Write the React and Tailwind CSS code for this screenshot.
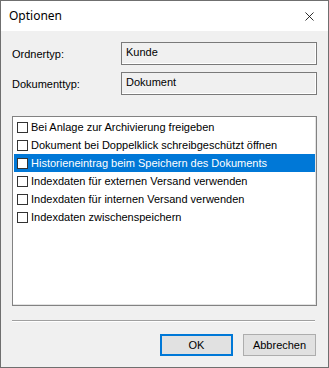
import { X } from 'lucide-react';

const items = [
  'Bei Anlage zur Archivierung freigeben',
  'Dokument bei Doppelklick schreibgeschützt öffnen',
  'Historieneintrag beim Speichern des Dokuments',
  'Indexdaten für externen Versand verwenden',
  'Indexdaten für internen Versand verwenden',
  'Indexdaten zwischenspeichern',
];

const sans = "font-['Liberation_Sans',Arial,sans-serif]";

function Field({ label, value }) {
  return (
    <div className="flex items-center">
      <div className="w-[109px] pt-[1px] text-[11px] text-black">{label}</div>
      <div className="h-[23px] w-[196px] border border-[#7a7a7a] bg-[#f0f0f0] px-[4px] pt-[2px] text-[11px] leading-[14px] text-black shadow-[inset_-1px_-1px_0_#ffffff]">
        {value}
      </div>
    </div>
  );
}

export default function App() {
  const selected = 2;

  return (
    <div className={`${sans} flex h-[368px] w-[329px] flex-col border border-[#6f6f6f] bg-white`}>
      <div className="flex h-[30px] shrink-0 items-center justify-between bg-white pl-[8px] pr-[11px]">
        <span className="font-['Noto_Sans',sans-serif] text-[12px] text-black">Optionen</span>
        <X className="h-[15px] w-[15px] text-black" strokeWidth={1.3} />
      </div>

      <div className="flex flex-1 flex-col bg-[#f0f0f0] px-[11px] pt-[11px]">
        <div className="flex flex-col gap-[7px]">
          <Field label="Ordnertyp:" value="Kunde" />
          <Field label="Dokumenttyp:" value="Dokument" />
        </div>

        <div className="mt-[21px] h-[190px] w-[305px] border border-[#828282] bg-white p-[1px] shadow-[inset_-1px_-1px_0_#e3e3e3]">
          <ul>
            {items.map((t, i) => (
              <li
                key={t}
                className={`flex h-[18px] items-center gap-[3px] pl-[3px] text-[11px] ${
                  i === selected ? 'bg-[#0078d7] text-white' : 'text-black'
                }`}
              >
                <span className="h-[11px] w-[11px] shrink-0 border border-[#333333] bg-white" />
                <span className="whitespace-nowrap">{t}</span>
              </li>
            ))}
          </ul>
        </div>

        <div className="mt-[14px] h-[2px] w-[303px] border-t border-[#a0a0a0] border-b border-b-white" />

        <div className="mt-[12px] flex justify-end gap-[10px] pr-[1px]">
          <button className="h-[22px] w-[73px] border-2 border-[#0078d7] bg-[#e1e1e1] text-[11px] text-black">
            OK
          </button>
          <button className="h-[22px] w-[73px] border border-[#adadad] bg-[#e1e1e1] text-[11px] text-black">
            Abbrechen
          </button>
        </div>
      </div>
    </div>
  );
}
